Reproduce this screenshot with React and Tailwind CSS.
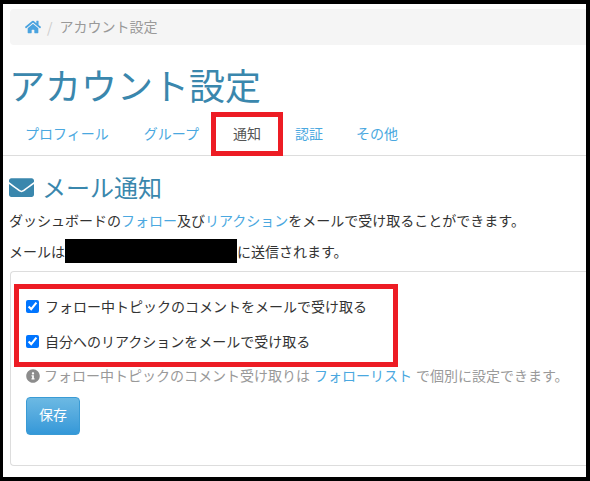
import React from "react";
import { FaHome, FaEnvelope, FaInfoCircle } from "react-icons/fa";

const tabs = ["プロフィール", "グループ", "通知", "認証", "その他"];

function Check({ label }) {
  return (
    <label className="flex items-center h-[35px] text-[14px] text-[#333]">
      <input type="checkbox" defaultChecked className="w-[13px] h-[13px] ml-[7px] mr-[6px] accent-[#0075ff]" />
      {label}
    </label>
  );
}

export default function App() {
  return (
    <div
      className="w-[590px] h-[481px] overflow-hidden bg-white border-t-4 border-l-[3px] border-r-4 border-b-4 border-black text-[#333]"
      style={{ fontFamily: '"Noto Sans CJK JP", "Liberation Sans", sans-serif' }}
    >
      {/* Breadcrumb */}
      <div className="ml-[7px] mt-[5px] h-[36px] bg-[#f5f5f5] rounded-l-[4px] flex items-center pl-[15px] text-[14px] leading-[20px]">
        <FaHome size={16} className="text-[#4aa3df]" />
        <span className="text-[#ccc] ml-[6px] mr-[7px]">/</span>
        <span className="text-[#999] mt-[-2px]">アカウント設定</span>
      </div>

      {/* Title */}
      <h1 className="ml-[6px] mt-[17px] text-[36px] leading-[44px] text-[#3a87ad]">アカウント設定</h1>

      {/* Tabs */}
      <div className="mt-[6px] h-[44px] flex border-b border-[#ddd] pl-[7px] text-[14px]">
        {tabs.map((t, i) =>
          i === 2 ? (
            <div key={t} className="w-[72px] shrink-0 h-[44px] mr-[-3px] ml-[-6px] pb-[1px] border-[5px] border-[#ed1c24] bg-white text-[#555] flex items-center justify-center">
              {t}
            </div>
          ) : (
            <div key={t} className={`h-[43px] px-[15px] pb-[1px] flex items-center text-[#4aa8e0] ${i === 0 ? "mr-[5px]" : "mr-[3px]"}`}>
              {t}
            </div>
          )
        )}
      </div>

      {/* Section */}
      <h2 className="mt-[15px] ml-[6px] flex items-center text-[24px] leading-[32px] text-[#3a87ad]">
        <FaEnvelope size={25} className="mr-[8px]" />
        メール通知
      </h2>
      <p className="ml-[6px] mt-[7px] text-[14px] leading-[20px]">
        ダッシュボードの<a className="text-[#4aa8e0]">フォロー</a>及び<a className="text-[#4aa8e0]">リアクション</a>をメールで受け取ることができます。
      </p>
      <p className="ml-[6px] mt-[9px] text-[14px] leading-[24px] flex">
        メールは<span className="w-[172px] h-[24px] bg-black" />に送信されます。
      </p>

      {/* Panel */}
      <div className="ml-[7px] mt-[8px] h-[195px] border border-r-0 border-[#ddd] rounded-l-[4px] pt-[12px]">
        <div className="ml-[3px] w-[384px] h-[83px] pb-[3px] border-[5px] border-[#ed1c24] flex flex-col justify-center">
          <Check label="フォロー中トピックのコメントをメールで受け取る" />
          <Check label="自分へのリアクションをメールで受け取る" />
        </div>
        <div className="ml-[15px] flex items-center h-[17px] text-[14px] text-[#999]">
          <FaInfoCircle size={14} className="mr-[4px] text-[#8c8c8c]" />
          フォロー中トピックのコメント受け取りは<a className="text-[#4aa8e0] mx-[4px]">フォローリスト</a>で個別に設定できます。
        </div>
        <button className="block ml-[15px] mt-[13px] pb-[3px] w-[54px] h-[38px] rounded-[4px] border border-[#3a9bd5] bg-gradient-to-b from-[#6cb9e3] to-[#3498d8] text-white text-[14px]">
          保存
        </button>
      </div>
    </div>
  );
}
